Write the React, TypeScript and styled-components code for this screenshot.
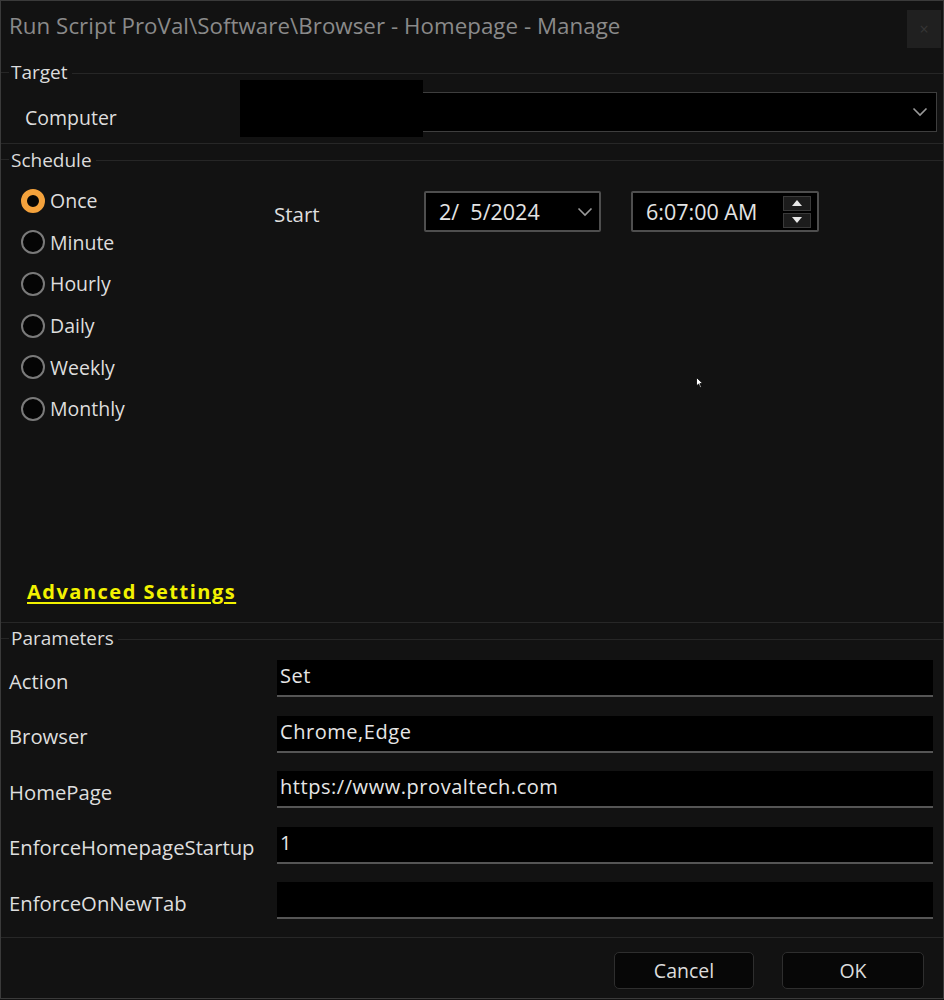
import React from "react";
import styled, { createGlobalStyle } from "styled-components";

const Global = createGlobalStyle`
  html, body { margin: 0; padding: 0; background: #121212; }
  body { font-family: "Open Sans", "Noto Sans", sans-serif; }
  * { box-sizing: border-box; }
`;

const Window = styled.div`
  position: relative;
  width: 944px;
  height: 999px;
  background: #121212;
  border: 1px solid #3a3a3a;
  display: flex;
  flex-direction: column;
  color: #dedede;
  font-size: 19.5px;
  overflow: hidden;
`;

const TitleBar = styled.div`
  height: 57px;
  display: flex;
  align-items: flex-start;
  justify-content: space-between;
  padding-left: 8px;
  padding-right: 2px;
`;

const Title = styled.div`
  line-height: 50px;
  font-size: 22.3px;
  color: #8a8a8a;
  letter-spacing: 0.05px;
`;

const CloseButton = styled.div`
  margin-top: 9px;
  width: 34px;
  height: 38px;
  background: #202020;
  color: #363636;
  font-size: 16px;
  display: flex;
  align-items: center;
  justify-content: center;
`;

const GroupHeader = styled.div<{ $h: number }>`
  height: ${(p) => p.$h}px;
  display: flex;
  align-items: center;
  color: #dcdcdc;
  font-size: 19px;
  &::before {
    content: "";
    width: 8px;
    height: 1px;
    background: #262626;
    margin-right: 2px;
  }
  &::after {
    content: "";
    flex: 1;
    height: 1px;
    background: #262626;
    margin-left: 4px;
    margin-top: 2px;
  }
`;

const Rule = styled.div`
  height: 1px;
  background: #272727;
`;

const TargetRow = styled.div`
  height: 57px;
  display: flex;
  align-items: flex-start;
  padding-top: 6px;
  padding-left: 24px;
  padding-right: 6px;
`;

const RowLabel = styled.div<{ $w: number; $top?: number; $size?: number }>`
  width: ${(p) => p.$w}px;
  flex-shrink: 0;
  padding-top: ${(p) => p.$top ?? 0}px;
  font-size: ${(p) => p.$size ?? 19.5}px;
  white-space: nowrap;
`;

const Combo = styled.div`
  position: relative;
  flex: 1;
  height: 40px;
  background: #000;
  border: 1px solid #3e3e3e;
  display: flex;
  align-items: center;
  justify-content: flex-end;
  padding-right: 8px;
`;

const Redaction = styled.div`
  position: absolute;
  left: -1px;
  top: -13px;
  width: 183px;
  height: 57px;
  background: #000;
`;

const ScheduleBody = styled.div`
  height: 447px;
  display: flex;
  flex-direction: column;
`;

const ScheduleTop = styled.div`
  display: flex;
  padding-top: 5px;
`;

const RadioList = styled.div`
  width: 273px;
  padding-left: 20px;
  display: flex;
  flex-direction: column;
`;

const RadioRow = styled.div`
  height: 41.6px;
  display: flex;
  align-items: center;
  gap: 5px;
`;

const RadioCircle = styled.span<{ $on?: boolean }>`
  width: 24px;
  height: 24px;
  border-radius: 50%;
  border: ${(p) => (p.$on ? "6px solid #f4a23c" : "2px solid #7a7a7a")};
  background: #050505;
  flex-shrink: 0;
  display: inline-block;
`;

const StartArea = styled.div`
  display: flex;
  align-items: flex-start;
  padding-top: 11px;
`;

const StartLabel = styled.div`
  width: 150px;
  padding-top: 9px;
  font-size: 20.5px;
`;

const DateBox = styled.div<{ $w: number }>`
  width: ${(p) => p.$w}px;
  height: 41px;
  background: #000;
  border: 2px solid #4e4e4e;
  border-radius: 2px;
  display: flex;
  align-items: center;
  padding-left: 13px;
  padding-right: 6px;
  font-size: 21.5px;
  color: #e4e4e4;
  white-space: pre;
`;

const Gap = styled.div<{ $w: number }>`
  width: ${(p) => p.$w}px;
  flex-shrink: 0;
`;

const Grow = styled.div`
  flex: 1;
`;

const Spinner = styled.div`
  width: 28px;
  height: 32px;
  display: flex;
  flex-direction: column;
  gap: 2px;
`;

const SpinHalf = styled.div`
  flex: 1;
  background: #1c1c1c;
  border: 1px solid #3a3a3a;
  display: flex;
  align-items: center;
  justify-content: center;
`;

const Advanced = styled.a`
  margin-top: auto;
  margin-bottom: 16px;
  margin-left: 26px;
  align-self: flex-start;
  color: #f2f200;
  font-weight: 700;
  font-size: 20px;
  text-decoration: underline;
  text-decoration-thickness: 2px;
  text-underline-offset: 3px;
  letter-spacing: 1.5px;
  line-height: 28px;
`;

const ParamList = styled.div`
  display: flex;
  flex-direction: column;
  padding-top: 7px;
  gap: 18.5px;
  padding-left: 8px;
  padding-right: 10px;
  height: 284px;
`;

const ParamRow = styled.div`
  display: flex;
  align-items: center;
  height: 37px;
`;

const ParamInput = styled.div`
  flex: 1;
  height: 37px;
  background: #000;
  border-bottom: 2px solid #555;
  padding-left: 3px;
  padding-top: 2px;
  color: #e6e6e6;
  font-size: 20px;
  letter-spacing: 0.55px;
  line-height: 28px;
`;

const Footer = styled.div`
  flex: 1;
  display: flex;
  justify-content: flex-end;
  align-items: flex-start;
  gap: 28px;
  padding-top: 14px;
  padding-right: 19px;
`;

const Button = styled.div<{ $w: number }>`
  width: ${(p) => p.$w}px;
  height: 37px;
  border: 1px solid #2e2e2e;
  border-radius: 5px;
  background: #070707;
  display: flex;
  align-items: center;
  justify-content: center;
  color: #dcdcdc;
  font-size: 19.5px;
`;

const Cursor = styled.svg`
  position: absolute;
  left: 695px;
  top: 376px;
`;

const Chevron = () => (
  <svg width="16" height="10" viewBox="0 0 16 10">
    <path d="M1.5 1.5 L8 8 L14.5 1.5" fill="none" stroke="#9a9a9a" strokeWidth="1.6" />
  </svg>
);

const radios = ["Once", "Minute", "Hourly", "Daily", "Weekly", "Monthly"];
const params: [string, string][] = [
  ["Action", "Set"],
  ["Browser", "Chrome,Edge"],
  ["HomePage", "https://www.provaltech.com"],
  ["EnforceHomepageStartup", "1"],
  ["EnforceOnNewTab", ""],
];

export default function App() {
  return (
    <>
      <Global />
      <Window>
        <TitleBar>
          <Title>Run Script ProVal\Software\Browser - Homepage - Manage</Title>
          <CloseButton>×</CloseButton>
        </TitleBar>

        <GroupHeader $h={28}>Target</GroupHeader>
        <TargetRow>
          <RowLabel $w={215} $top={12}>Computer</RowLabel>
          <Combo>
            <Redaction />
            <Chevron />
          </Combo>
        </TargetRow>
        <Rule />

        <GroupHeader $h={31}>Schedule</GroupHeader>
        <ScheduleBody>
          <ScheduleTop>
            <RadioList>
              {radios.map((r, i) => (
                <RadioRow key={r}>
                  <RadioCircle $on={i === 0} />
                  {r}
                </RadioRow>
              ))}
            </RadioList>
            <StartArea>
              <StartLabel>Start</StartLabel>
              <DateBox $w={177}>
                {"2/  5/2024"}
                <Grow />
                <Chevron />
              </DateBox>
              <Gap $w={30} />
              <DateBox $w={188}>
                6:07:00 AM
                <Grow />
                <Spinner>
                  <SpinHalf>
                    <svg width="10" height="6" viewBox="0 0 10 6">
                      <path d="M5 0 L10 6 L0 6 Z" fill="#e8e8e8" />
                    </svg>
                  </SpinHalf>
                  <SpinHalf>
                    <svg width="10" height="6" viewBox="0 0 10 6">
                      <path d="M0 0 L10 0 L5 6 Z" fill="#e8e8e8" />
                    </svg>
                  </SpinHalf>
                </Spinner>
              </DateBox>
            </StartArea>
          </ScheduleTop>
          <Advanced>Advanced Settings</Advanced>
        </ScheduleBody>
        <Rule />

        <GroupHeader $h={30}>Parameters</GroupHeader>
        <ParamList>
          {params.map(([k, v]) => (
            <ParamRow key={k}>
              <RowLabel $w={268} $top={4} $size={20.3}>{k}</RowLabel>
              <ParamInput>{v}</ParamInput>
            </ParamRow>
          ))}
        </ParamList>
        <Rule />

        <Footer>
          <Button $w={140}>Cancel</Button>
          <Button $w={142}>OK</Button>
        </Footer>

        <Cursor width="8" height="12" viewBox="0 0 8 12">
          <path d="M0.5 0.5 L0.5 9 L2.6 7 L4.2 10.5 L5.4 10 L3.9 6.6 L6.8 6.6 Z" fill="#fff" stroke="#000" strokeWidth="0.8" />
        </Cursor>
      </Window>
    </>
  );
}
